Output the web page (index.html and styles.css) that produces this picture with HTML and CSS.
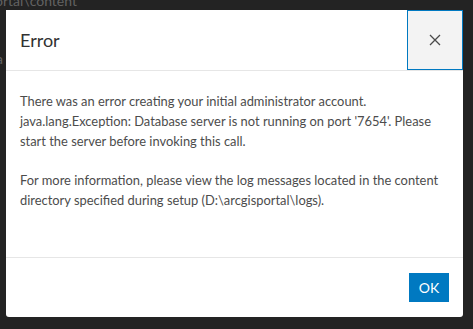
FILE: index.html
```html
<!DOCTYPE html>
<html>
<head>
<meta charset="utf-8">
<link rel="stylesheet" href="styles.css">
</head>
<body>
<div class="page">
  <div class="bg-line bg-top">ortal\content</div>
  <div class="bg-line bg-mid">rta</div>
</div>
<div class="overlay">
  <div class="dialog" role="dialog">
    <div class="header">
      <h2 class="title">Error</h2>
      <button class="close" aria-label="Close">
        <svg width="12" height="12" viewBox="0 0 12 12"><path d="M1 1L11 11M11 1L1 11" stroke="#4a4a4a" stroke-width="1.3" fill="none"/></svg>
      </button>
    </div>
    <div class="body">
      <p>There was an error creating your initial administrator account. java.lang.Exception: Database server is not running on port '7654'. Please start the server before invoking this call.</p>
      <p>For more information, please view the log messages located in the content directory specified during setup (D:\arcgisportal\logs).</p>
    </div>
    <div class="footer">
      <button class="ok">OK</button>
    </div>
  </div>
</div>
</body>
</html>
```
FILE: styles.css
```css
html, body {
  margin: 0;
  padding: 0;
}
body {
  width: 473px;
  height: 329px;
  background: #232323;
  font-family: "Lato", "Open Sans", sans-serif;
  overflow: hidden;
  position: relative;
}
.page {
  color: #626262;
  font-size: 14px;
}
.bg-line {
  white-space: nowrap;
}
.bg-top {
  margin-top: -8px;
  margin-left: -5px;
  line-height: 18px;
}
.bg-mid {
  margin-top: 40px;
  margin-left: -14px;
}
.overlay {
  position: absolute;
  inset: 0;
  padding: 10px 10px 12px 6px;
}
.dialog {
  width: 457px;
  height: 307px;
  background: #fff;
  border-radius: 0 0 3px 3px;
  display: flex;
  flex-direction: column;
  box-sizing: border-box;
}
.header {
  display: flex;
  align-items: stretch;
  height: 60px;
  border-bottom: 1px solid #e6e6e6;
  box-sizing: content-box;
}
.title {
  flex: 1;
  margin: 0;
  padding-left: 14px;
  font-size: 18px;
  font-weight: 400;
  color: #323232;
  line-height: 60px;
}
.close {
  width: 56px;
  height: 60px;
  margin: 0;
  padding: 0;
  background: #f3f3f3;
  border: 1.5px solid #0079c1;
  display: flex;
  align-items: center;
  justify-content: center;
  box-sizing: border-box;
}
.body {
  flex: 1;
  padding: 20px 14px 0 14px;
  border-bottom: 1px solid #e6e6e6;
  color: #4c4c4c;
  font-size: 12.9px;
  line-height: 20px;
}
.body p {
  margin: 0 0 19px 0;
}
.footer {
  display: flex;
  justify-content: flex-end;
  padding: 15px 14px 15px 14px;
}
.ok {
  width: 40px;
  height: 29px;
  background: #0079c1;
  color: #fff;
  border: none;
  font-family: inherit;
  font-size: 14px;
  padding: 0;
}
```
